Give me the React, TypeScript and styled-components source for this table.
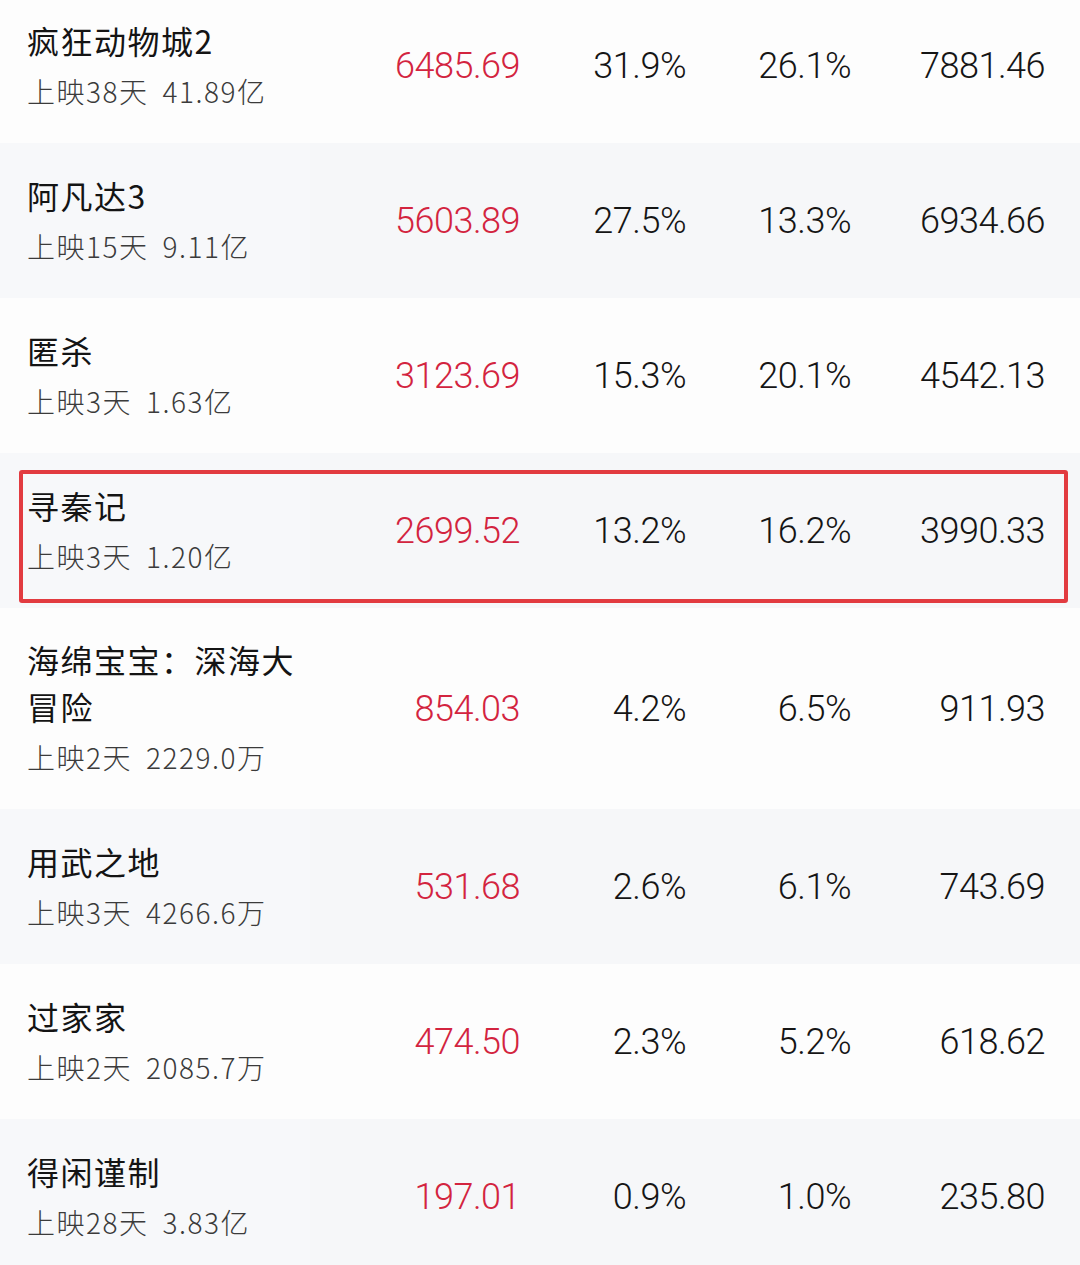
import React from 'react';
import styled, { createGlobalStyle } from 'styled-components';

const GlobalStyle = createGlobalStyle`
  html, body {
    margin: 0;
    padding: 0;
    background: #fbfbfc;
    overflow: hidden;
  }
`;

const Table = styled.section`
  width: 1080px;
  margin-top: -12px;
  display: flex;
  flex-direction: column;
`;

const Row = styled.div<{ $alt: boolean }>`
  position: relative;
  display: grid;
  grid-template-columns: 310px 210px 166px 165px 194px;
  align-items: center;
  min-height: 155px;
  background: ${(p) => (p.$alt ? '#f6f7f9' : '#fdfdfd')};
`;

const NameCell = styled.div`
  padding: 28px 0 28px 27px;
  align-self: stretch;
  display: flex;
  flex-direction: column;
  justify-content: center;
  background: rgba(255, 255, 255, 0.2);
`;

const Title = styled.div`
  font-family: "Noto Sans CJK SC", "Noto Sans", sans-serif;
  font-size: 32px;
  font-weight: 400;
  letter-spacing: 1.5px;
  line-height: 47px;
  color: #141414;
  width: 290px;
`;

const Sub = styled.div`
  margin-top: 3px;
  font-family: "Noto Sans CJK SC", "Noto Sans", sans-serif;
  font-size: 28px;
  font-weight: 300;
  letter-spacing: 1.5px;
  line-height: 48px;
  color: #3b3b3b;
  white-space: nowrap;
  > span {
    margin-left: 14px;
  }
`;

const Num = styled.div<{ $red?: boolean }>`
  text-align: right;
  font-family: Roboto, "Liberation Sans", sans-serif;
  font-size: 36px;
  font-weight: 300;
  letter-spacing: -0.5px;
  color: ${(p) => (p.$red ? '#d3243f' : '#151515')};
`;

const Highlight = styled.div`
  position: absolute;
  top: 17px;
  bottom: 5px;
  left: 19px;
  right: 12px;
  border: 4px solid #e23b40;
  border-radius: 3px;
  pointer-events: none;
`;

type Movie = {
  name: string;
  days: string;
  total: string;
  box: string;
  share: string;
  seat: string;
  est: string;
  mark?: boolean;
};

const movies: Movie[] = [
  { name: '疯狂动物城2', days: '上映38天', total: '41.89亿', box: '6485.69', share: '31.9%', seat: '26.1%', est: '7881.46' },
  { name: '阿凡达3', days: '上映15天', total: '9.11亿', box: '5603.89', share: '27.5%', seat: '13.3%', est: '6934.66' },
  { name: '匿杀', days: '上映3天', total: '1.63亿', box: '3123.69', share: '15.3%', seat: '20.1%', est: '4542.13' },
  { name: '寻秦记', days: '上映3天', total: '1.20亿', box: '2699.52', share: '13.2%', seat: '16.2%', est: '3990.33', mark: true },
  { name: '海绵宝宝：深海大冒险', days: '上映2天', total: '2229.0万', box: '854.03', share: '4.2%', seat: '6.5%', est: '911.93' },
  { name: '用武之地', days: '上映3天', total: '4266.6万', box: '531.68', share: '2.6%', seat: '6.1%', est: '743.69' },
  { name: '过家家', days: '上映2天', total: '2085.7万', box: '474.50', share: '2.3%', seat: '5.2%', est: '618.62' },
  { name: '得闲谨制', days: '上映28天', total: '3.83亿', box: '197.01', share: '0.9%', seat: '1.0%', est: '235.80' },
];

export default function App() {
  return (
    <>
      <GlobalStyle />
      <Table>
        {movies.map((m, i) => (
          <Row key={m.name} $alt={i % 2 === 1}>
            <NameCell>
              <Title>{m.name}</Title>
              <Sub>
                {m.days}
                <span>{m.total}</span>
              </Sub>
            </NameCell>
            <Num $red>{m.box}</Num>
            <Num>{m.share}</Num>
            <Num>{m.seat}</Num>
            <Num>{m.est}</Num>
            {m.mark && <Highlight />}
          </Row>
        ))}
      </Table>
    </>
  );
}
